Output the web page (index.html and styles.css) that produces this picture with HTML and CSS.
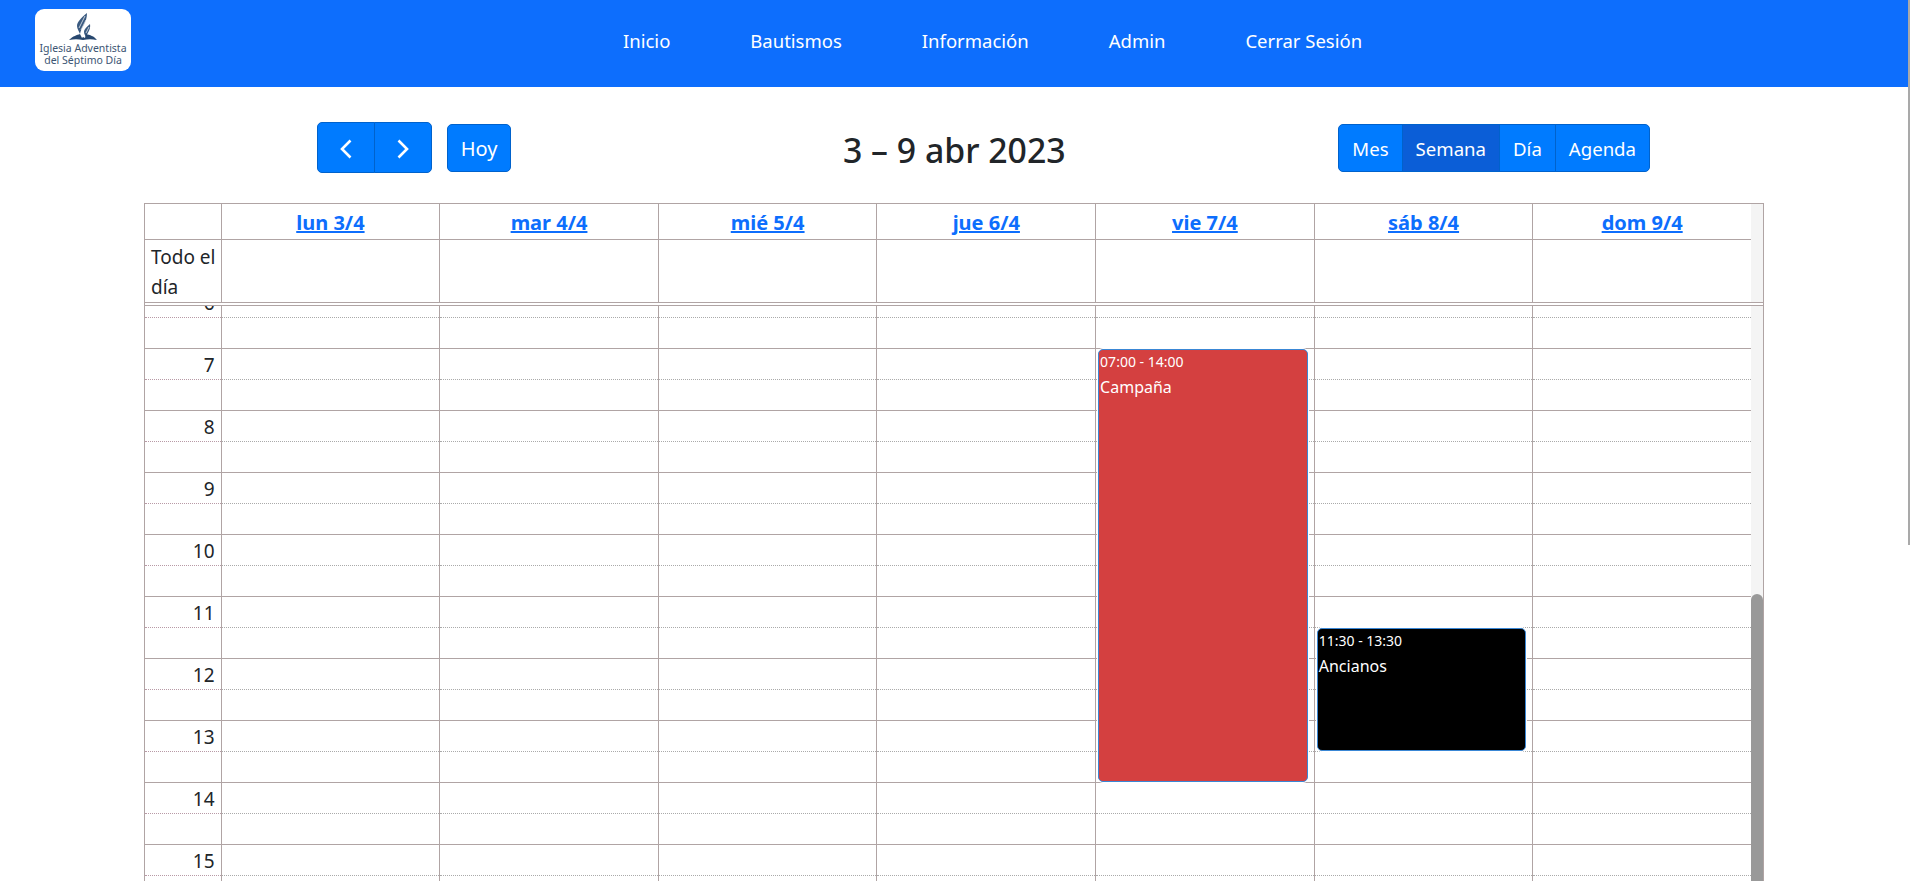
FILE: index.html
```html
<!DOCTYPE html>
<html lang="es">

<head>
    <meta charset="UTF-8">
    <meta name="viewport" content="width=device-width, initial-scale=1.0">
    <title>Calendario</title>
    <link rel="stylesheet" href="styles.css">
</head>

<body>
    <nav class="navbar">
        <a class="logo" href="#">
            <svg class="logo-mark" viewBox="0 0 30 28" width="30" height="28">
                <path fill="#3a5a80" d="M19 0C13 5 9 9 9 13c0 3 2 5 3 8 1-6 7-11 7-21z"/>
                <path fill="#3a5a80" d="M22 11c-3 3-6 5-6 8 0 2 1 3 2 5 1-4 5-7 4-13z"/>
                <path stroke="#fff" stroke-width=".7" d="M17 3 11 15M18 7l-5 10M21 14l-3 6"/>
                <path fill="#27476e" d="M1 27c4-4 8-5 11-6l2 4 1-1 2 1 1-4c4 1 8 2 11 6-5-1-9-1-14 0-5-1-9-1-14 0z"/>
            </svg>
            <span class="logo-text">Iglesia Adventista<br>del Séptimo Día</span>
        </a>
        <ul class="nav-links">
            <li><a href="#">Inicio</a></li>
            <li><a href="#">Bautismos</a></li>
            <li><a href="#">Información</a></li>
            <li><a href="#">Admin</a></li>
            <li><a href="#">Cerrar Sesión</a></li>
        </ul>
    </nav>

    <main class="page">
        <div class="toolbar">
            <div class="btn-group tall">
                <button type="button" class="btn nav-btn" aria-label="Anterior">
                    <svg viewBox="0 0 12 20" width="12" height="20"><path d="M10.5 1.5 2 10l8.5 8.5" fill="none" stroke="#fff" stroke-width="2.6"/></svg>
                </button>
                <button type="button" class="btn nav-btn" aria-label="Siguiente">
                    <svg viewBox="0 0 12 20" width="12" height="20"><path d="M1.5 1.5 10 10l-8.5 8.5" fill="none" stroke="#fff" stroke-width="2.6"/></svg>
                </button>
            </div>
            <button type="button" class="btn today">Hoy</button>
            <h2 class="range">3 – 9 abr 2023</h2>
            <div class="btn-group views">
                <button type="button" class="btn">Mes</button>
                <button type="button" class="btn active">Semana</button>
                <button type="button" class="btn">Día</button>
                <button type="button" class="btn">Agenda</button>
            </div>
        </div>

        <div class="calendar">
            <div class="cal-head">
                <div class="head-row">
                    <div class="gutter-cell"></div>
                    <div class="head-cell"><a href="#">lun 3/4</a></div>
                    <div class="head-cell"><a href="#">mar 4/4</a></div>
                    <div class="head-cell"><a href="#">mié 5/4</a></div>
                    <div class="head-cell"><a href="#">jue 6/4</a></div>
                    <div class="head-cell"><a href="#">vie 7/4</a></div>
                    <div class="head-cell"><a href="#">sáb 8/4</a></div>
                    <div class="head-cell"><a href="#">dom 9/4</a></div>
                </div>
                <div class="allday-row">
                    <div class="gutter-cell">Todo el día</div>
                    <div class="head-cell"></div>
                    <div class="head-cell"></div>
                    <div class="head-cell"></div>
                    <div class="head-cell"></div>
                    <div class="head-cell"></div>
                    <div class="head-cell"></div>
                    <div class="head-cell"></div>
                </div>
            </div>
            <div class="cal-wrap">
                <div class="cal-body" id="calBody">
                    <div class="time-grid" id="timeGrid"></div>
                </div>
                <div class="scroll-track"><div class="scroll-thumb"></div></div>
            </div>
        </div>
    </main>
    <div class="page-thumb"></div>
    <script src="calendar.js"></script>
</body>

</html>
```

FILE: styles.css
```css
html {
    scrollbar-width: none;
}

body {
    margin: 0 2px 0 0;
    background-color: #fff;
    color: #212529;
    font-family: "Noto Sans", sans-serif;
    font-size: 19px;
    line-height: 30px;
}

.page-thumb {
    position: fixed;
    top: 0;
    right: 0;
    width: 2px;
    height: 545px;
    background-color: #a9a9a9;
}

.navbar {
    display: flex;
    align-items: flex-start;
    height: 87px;
    background-color: #0d6efd;
}

.logo {
    display: flex;
    flex-direction: column;
    align-items: center;
    width: 96px;
    height: 62px;
    margin: 9px 0 0 35px;
    padding-top: 4px;
    box-sizing: border-box;
    border-radius: 9px;
    background-color: #fff;
    text-decoration: none;
}

.logo-text {
    margin-top: 1px;
    color: #3b5573;
    font-size: 10.5px;
    line-height: 12px;
    text-align: center;
    white-space: nowrap;
}

.nav-links {
    display: flex;
    gap: 80px;
    margin: 26px 0 0 492px;
    padding: 0;
    list-style: none;
}

.nav-links a {
    color: #fff;
    font-size: 18.5px;
    text-decoration: none;
}

.page {
    padding: 35px 144px 21px;
}

.toolbar {
    display: flex;
    align-items: center;
    height: 51px;
    margin: 0 114px 30px 173px;
}

.btn-group {
    display: flex;
}

.btn {
    height: 48px;
    padding: 2px 13px 0;
    border: 1px solid #0062cc;
    border-radius: 5px;
    background-color: #007bff;
    color: #fff;
    font-family: inherit;
    font-size: 18.6px;
}

.btn-group .btn {
    border-radius: 0;
    margin-left: -1px;
}

.btn-group .btn:first-child {
    border-radius: 5px 0 0 5px;
    margin-left: 0;
}

.btn-group .btn:last-child {
    border-radius: 0 5px 5px 0;
}

.btn.active {
    background-color: #0b5ed7;
}

.nav-btn {
    display: flex;
    align-items: center;
    justify-content: center;
    width: 58px;
    height: 51px;
    padding: 3px 0 0;
}

.today {
    width: 64px;
    margin-left: 15px;
    padding: 2px 0 0;
    font-size: 20px;
}

.range {
    margin: 4px 0 0 332px;
    font-size: 33.8px;
    font-weight: 500;
    line-height: 48px;
    white-space: nowrap;
}

.views {
    margin-left: auto;
}

.calendar {
    border: 1px solid #b0a4a4;
}

.cal-head {
    border-bottom: 1px solid #b0a4a4;
    margin-bottom: 2px;
    background-color: #f4f4f4;
}

.head-row, .allday-row, .time-grid {
    display: grid;
    grid-template-columns: 75.6px repeat(7, 1fr);
}

.head-row, .allday-row {
    margin-right: 12px;
    background-color: #fff;
}

.head-row {
    height: 35px;
    border-bottom: 1px solid #b0a4a4;
}

.head-row .head-cell {
    padding-top: 4px;
}

.allday-row {
    height: 62px;
}

.gutter-cell {
    padding: 2px 0 0 6px;
}

.head-cell {
    border-left: 1px solid #b0a4a4;
    text-align: center;
}

.head-cell a {
    color: #0d6efd;
    font-size: 20px;
    font-weight: 700;
}

.cal-wrap {
    display: flex;
    height: 1096px;
    border-top: 1px solid #b0a4a4;
}

.cal-body {
    flex: 1;
    overflow: hidden;
}

.scroll-track {
    position: relative;
    width: 12px;
    background-color: #f4f4f4;
}

.scroll-thumb {
    position: absolute;
    top: 288px;
    right: 0;
    bottom: 0;
    left: 0;
    border-radius: 6px;
    background-color: #999;
}

.day-col {
    position: relative;
    border-left: 1px solid #b0a4a4;
}

.hour {
    height: 62px;
    box-sizing: border-box;
    border-top: 1px solid #b0a4a4;
}

.hour:first-child {
    border-top-color: transparent;
}

.half {
    height: 30px;
    border-bottom: 1px dotted #aaa;
}

.time-label {
    box-sizing: border-box;
    height: 31px;
    border-bottom: 1px dotted #b89aa6;
    padding: 1px 6px 0 0;
    text-align: right;
}

.event {
    position: absolute;
    left: 2px;
    right: 6px;
    box-sizing: border-box;
    padding: 1px 1px;
    border: 1px solid #3a87d5;
    border-radius: 5px;
    box-shadow: 0 0 0 1px #fff;
    color: #fff;
    font-size: 16px;
    line-height: 24px;
}

.event-time {
    font-size: 14px;
    line-height: 21px;
}

.event-title {
    margin-top: 3px;
}

.event-red {
    background-color: #d44040;
}

.event-black {
    background-color: #000;
}
```

FILE: calendar.js
```js
const HOUR_HEIGHT = 62;

// dayIndex: 0 = lunes
const events = [
    { day: 4, start: 7, end: 14, label: "07:00 - 14:00", title: "Campaña", cls: "event-red" },
    { day: 5, start: 11.5, end: 13.5, label: "11:30 - 13:30", title: "Ancianos", cls: "event-black" }
];

function buildGrid() {
    const grid = document.getElementById("timeGrid");

    const gutter = document.createElement("div");
    for (let h = 0; h < 24; h++) {
        const hour = document.createElement("div");
        hour.className = "hour";
        const label = document.createElement("div");
        label.className = "time-label";
        label.textContent = h;
        hour.appendChild(label);
        gutter.appendChild(hour);
    }
    grid.appendChild(gutter);

    for (let d = 0; d < 7; d++) {
        const col = document.createElement("div");
        col.className = "day-col";
        for (let h = 0; h < 24; h++) {
            const hour = document.createElement("div");
            hour.className = "hour";
            hour.innerHTML = '<div class="half"></div>';
            col.appendChild(hour);
        }
        events.filter(e => e.day === d).forEach(e => {
            const ev = document.createElement("div");
            ev.className = "event " + e.cls;
            ev.style.top = (e.start * HOUR_HEIGHT + 1) + "px";
            ev.style.height = ((e.end - e.start) * HOUR_HEIGHT - 1) + "px";
            ev.innerHTML = '<div class="event-time">' + e.label + '</div><div class="event-title">' + e.title + '</div>';
            col.appendChild(ev);
        });
        grid.appendChild(col);
    }

    // the view opens scrolled down to the end of the day
    const body = document.getElementById("calBody");
    body.scrollTop = body.scrollHeight;
}

buildGrid();
```
